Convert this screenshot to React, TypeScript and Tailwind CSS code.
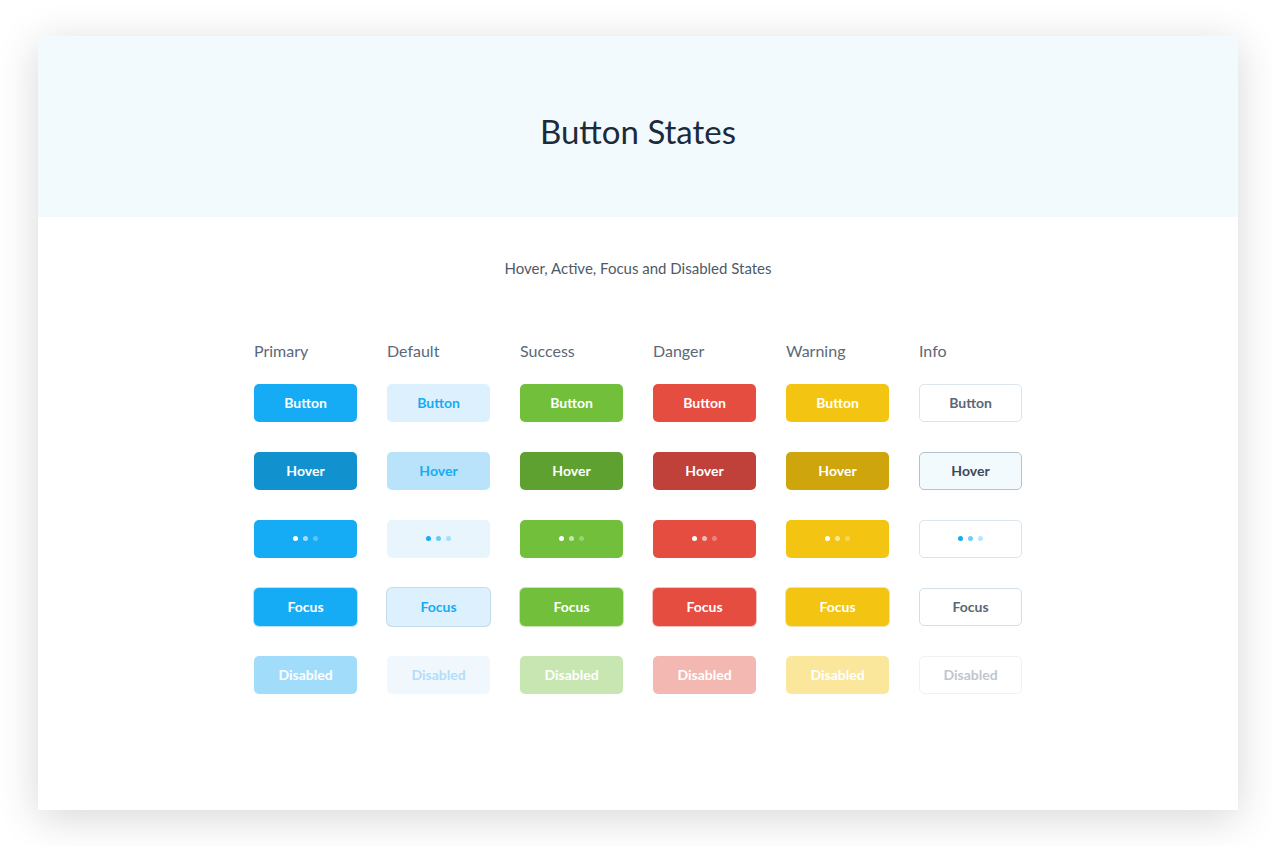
import React from "react";

type Variant = {
  label: string;
  button: string;
  hover: string;
  loading: string;
  dots: string;
  focus: string;
  disabled: string;
};

const VARIANTS: Variant[] = [
  {
    label: "Primary",
    button: "bg-[#15abf5] text-white",
    hover: "bg-[#1192cf] text-white",
    loading: "bg-[#15abf5]",
    dots: "bg-white",
    focus: "bg-[#15abf5] text-white ring-1 ring-[#b9e3f8]",
    disabled: "bg-[#a1dcfa] text-white",
  },
  {
    label: "Default",
    button: "bg-[#dcf1fd] text-[#15abf5]",
    hover: "bg-[#b8e3fb] text-[#15abf5]",
    loading: "bg-[#e8f5fd]",
    dots: "bg-[#15abf5]",
    focus: "bg-[#dcf1fd] text-[#15abf5] ring-1 ring-[#c4dbe8]",
    disabled: "bg-[#f0f8fe] text-[#b1defa]",
  },
  {
    label: "Success",
    button: "bg-[#71bf3b] text-white",
    hover: "bg-[#5fa131] text-white",
    loading: "bg-[#71bf3b]",
    dots: "bg-white",
    focus: "bg-[#71bf3b] text-white ring-1 ring-[#cbe4bb]",
    disabled: "bg-[#c8e6b2] text-white",
  },
  {
    label: "Danger",
    button: "bg-[#e44d3f] text-white",
    hover: "bg-[#c0403a] text-white",
    loading: "bg-[#e44d3f]",
    dots: "bg-white",
    focus: "bg-[#e44d3f] text-white ring-1 ring-[#f2c1bc]",
    disabled: "bg-[#f4b8b2] text-white",
  },
  {
    label: "Warning",
    button: "bg-[#f3c411] text-white",
    hover: "bg-[#cea50c] text-white",
    loading: "bg-[#f3c411]",
    dots: "bg-white",
    focus: "bg-[#f3c411] text-white ring-1 ring-[#f3e3a6]",
    disabled: "bg-[#fae79b] text-white",
  },
  {
    label: "Info",
    button: "bg-white text-[#5b6777] border border-[#dbe5eb]",
    hover: "bg-[#f3fafe] text-[#3d4858] border border-[#b4c2ce]",
    loading: "bg-white border border-[#dbe5eb]",
    dots: "bg-[#15abf5]",
    focus: "bg-white text-[#5b6777] border border-[#cfe0ea]",
    disabled: "bg-white text-[#c0c6ce] border border-[#eef2f5]",
  },
];

const BASE =
  "flex h-[38px] w-[103px] items-center justify-center rounded-[5px] pb-px text-[14px] font-bold";

function Dots({ color }: { color: string }) {
  return (
    <span className="flex items-center gap-[5px]">
      <span className={`h-[5px] w-[5px] rounded-full ${color}`} />
      <span className={`h-[5px] w-[5px] rounded-full opacity-60 ${color}`} />
      <span className={`h-[5px] w-[5px] rounded-full opacity-30 ${color}`} />
    </span>
  );
}

export default function App() {
  return (
    <div
      className="min-h-screen bg-white px-[38px] pt-9 pb-9"
      style={{ fontFamily: "Lato, 'Noto Sans', sans-serif" }}
    >
      <div className="h-[774px] w-[1200px] bg-white shadow-[0_8px_40px_rgba(0,0,0,0.16)]">
        <div className="h-[181px] bg-[#f3fafe] pt-[75px] text-center">
          <h1 className="text-[33px] leading-[40px] text-[#1c2b3c]">Button States</h1>
        </div>

        <p className="mt-[41px] text-center text-[15px] leading-[20px] text-[#4e5a68]">
          Hover, Active, Focus and Disabled States
        </p>

        <div className="mx-auto mt-[61px] grid w-[768px] grid-cols-6 gap-x-[30px]">
          {VARIANTS.map((v) => (
            <div key={v.label} className="flex flex-col gap-[30px]">
              <div className="-mb-[9px] text-[16px] leading-[24px] text-[#5c6878]">{v.label}</div>
              <button className={`${BASE} ${v.button}`}>Button</button>
              <button className={`${BASE} ${v.hover}`}>Hover</button>
              <button className={`${BASE} ${v.loading}`}>
                <Dots color={v.dots} />
              </button>
              <button className={`${BASE} ${v.focus}`}>Focus</button>
              <button className={`${BASE} ${v.disabled}`}>Disabled</button>
            </div>
          ))}
        </div>
      </div>
    </div>
  );
}
